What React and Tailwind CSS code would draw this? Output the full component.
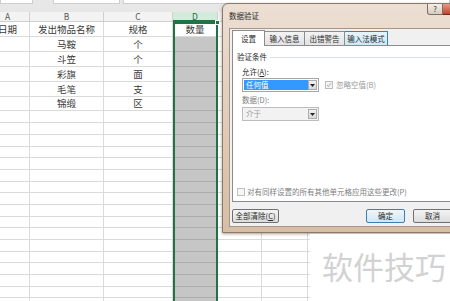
const cols = ['w-[44px]', 'w-[74px]', 'w-[69px]', 'w-[45px]', 'w-[44px]', 'w-[46px]', 'w-[160px]']
// E, F and G sit under the dialog, so their letters are never seen
const letters = ['A', 'B', 'C', 'D', '', '', '']

const data = [
  ['日期', '发出物品名称', '规格', '数量'],
  ['', '马鞍', '个', ''],
  ['', '斗笠', '个', ''],
  ['', '彩旗', '面', ''],
  ['', '毛笔', '支', ''],
  ['', '锦缎', '区', ''],
]
const dataH = ['h-[15px]', 'h-[15px]', 'h-[15px]', 'h-[15px]', 'h-[15px]', 'h-[14px]']
const emptyH = [12, 12, 12, 11, 12, 12, 11, 12, 12, 11, 12, 12, 11, 12, 12, 11, 12]

function Row({ cells, h, first }) {
  return (
    <div className={`flex ${h}`}>
      {cols.map((w, i) => {
        const sel = i === 3 && !first
        return (
          <div
            key={i}
            className={`${w} shrink-0 flex items-center justify-center border-r border-b ${
              sel ? 'bg-[#c6c6c6] border-b-[#adadad] border-r-[#c6c6c6]' : 'border-[#dadada]'
            }`}
          >
            {cells[i] || ''}
          </div>
        )
      })}
    </div>
  )
}

function Arrow() {
  return (
    <svg width="5" height="3" viewBox="0 0 5 3">
      <path d="M0 0h5L2.5 3z" fill="#222" />
    </svg>
  )
}

function Dialog() {
  return (
    <div className="absolute left-[222px] top-[3px] w-[240px] h-[230px] rounded-t-[6px] border border-[#8a7a6c] bg-gradient-to-b from-[#ecdfd3] via-[#e0ccb9] to-[#d6bda6] px-[6px] pb-[5px] flex flex-col shadow-[0_1px_3px_rgba(90,60,30,0.5)]">
      <div className="h-[24px] flex items-start">
        <div className="mt-[7px] text-[7.5px] leading-[10px] text-[#2a2a2a]">数据验证</div>
        <div className="ml-auto flex">
          <div className="w-[16px] h-[11px] border border-t-0 border-[#7d6e62] rounded-bl-[3px] bg-gradient-to-b from-[#f6efe8] to-[#d8cbbe] flex items-center justify-center text-[7.5px] leading-none text-[#333]">?</div>
          <div className="w-[12px] h-[11px] border border-t-0 border-l-0 border-[#6e2a1e] bg-gradient-to-b from-[#e29a86] to-[#c2412a]"></div>
        </div>
      </div>
      <div className="flex-1 bg-[#f0f0f0] border border-[#a99584] px-[2px] pt-[2px] flex flex-col text-[7.5px] leading-[10px] text-[#2a2a2a]">
        <div className="flex h-[14px] items-end">
          <div className="w-[33px] h-[16px] -mb-px z-10 bg-white border border-b-0 border-[#898c95] flex items-center justify-center">设置</div>
          <div className="w-[40px] h-[14px] bg-gradient-to-b from-[#f3f3f3] to-[#e3e3e3] border border-l-0 border-b-0 border-[#898c95] flex items-center justify-center">输入信息</div>
          <div className="w-[40px] h-[14px] bg-gradient-to-b from-[#f3f3f3] to-[#e3e3e3] border border-l-0 border-b-0 border-[#898c95] flex items-center justify-center">出错警告</div>
          <div className="w-[43px] h-[14px] bg-gradient-to-b from-[#e6f4fc] to-[#cde8f7] border border-l-0 border-b-0 border-[#3c7fb1] flex items-center justify-center">输入法模式</div>
        </div>
        <div className="h-[157px] bg-white border border-[#898c95] flex flex-col pb-[4px]">
          <div className="mt-[6px] flex items-center pl-[4px]">
            <span>验证条件</span>
            <div className="flex-1 ml-[3px] border-t border-[#d5dfe5]"></div>
          </div>
          <div className="pl-[9px]">
            <div className="mt-[5px]">
              允许(<span className="underline">A</span>):
            </div>
            <div className="mt-[1px] flex items-center">
              <div className="w-[77px] h-[14px] border border-[#a6a6a6] bg-white p-px flex">
                <div className="flex-1 bg-[#3399ff] text-white pl-[2px] flex items-center">任何值</div>
                <div className="w-[9px] border border-[#acacac] bg-gradient-to-b from-[#f2f2f2] to-[#d8d8d8] flex items-center justify-center">
                  <Arrow />
                </div>
              </div>
              <div className="ml-[6px] w-[8px] h-[8px] border border-[#bcbcbc] bg-[#f4f4f4] flex items-center justify-center">
                <svg width="6" height="6" viewBox="0 0 6 6">
                  <path d="M1 3l1.4 1.5L5 1.2" fill="none" stroke="#a8a8a8" strokeWidth="1" />
                </svg>
              </div>
              <span className="ml-[3px] text-[#9a9a9a]">忽略空值(B)</span>
            </div>
            <div className="mt-[3px] text-[#7a7a7a]">数据(D):</div>
            <div className="mt-[2px] w-[77px] h-[14px] border border-[#bdbdbd] bg-[#f2f2f2] p-px flex">
              <div className="flex-1 text-[#9a9a9a] pl-[2px] flex items-center">介于</div>
              <div className="w-[9px] border border-[#acacac] bg-gradient-to-b from-[#f2f2f2] to-[#d8d8d8] flex items-center justify-center">
                <Arrow />
              </div>
            </div>
          </div>
          <div className="mt-auto pl-[4px] flex items-center">
            <div className="w-[8px] h-[8px] border border-[#c0c0c0] bg-[#f6f6f6]"></div>
            <span className="ml-[2px] text-[#7e7e7e]">对有同样设置的所有其他单元格应用这些更改(P)</span>
          </div>
        </div>
        <div className="mt-[7px] flex">
          <div className="w-[52px] h-[14px] rounded-[2px] border border-[#707070] bg-gradient-to-b from-[#f4f4f4] to-[#dcdcdc] flex items-center justify-center">
            全部清除(<span className="underline">C</span>)
          </div>
          <div className="ml-[87px] w-[43px] h-[14px] rounded-[2px] border border-[#3c7fb1] bg-gradient-to-b from-[#eef6fb] to-[#d3e6f3] flex items-center justify-center">确定</div>
          <div className="ml-[8px] w-[43px] h-[14px] rounded-[2px] border border-[#707070] bg-gradient-to-b from-[#f4f4f4] to-[#dcdcdc] flex items-center justify-center">取消</div>
        </div>
      </div>
    </div>
  )
}

export default function App() {
  return (
    <div className="relative w-[450px] h-[301px] overflow-hidden bg-white font-['Noto_Sans_CJK_SC',sans-serif] text-[9.5px] text-[#3a3a3a]">
      <div className="h-[12px] bg-[#e7e7e7] flex items-start">
        <div className="w-[33px] h-[4px] bg-white border border-t-0 border-[#cdcdcd]"></div>
        <div className="ml-[20px] w-[67px] h-[4px] bg-white border border-t-0 border-[#cdcdcd]"></div>
        <div className="ml-[3px] flex-1 h-[4px] bg-white border border-t-0 border-[#cdcdcd]"></div>
      </div>
      <div className="-ml-[14px]">
        <div className="flex h-[10px] bg-[#f3f3f3] text-[8.5px] text-[#555]">
          {cols.map((w, i) => (
            <div
              key={i}
              className={`${w} shrink-0 flex items-center justify-center border-r ${
                i === 3 ? 'bg-[#d3ebdb] text-[#217346] border-b-2 border-b-[#217346] border-r-[#cfcfcf]' : 'border-b border-[#cfcfcf]'
              }`}
            >
              {letters[i]}
            </div>
          ))}
        </div>
        {data.map((r, i) => (
          <Row key={i} cells={r} h={dataH[i]} first={i === 0} />
        ))}
        {emptyH.map((h, i) => (
          <Row key={i} cells={[]} h={h === 12 ? 'h-[12px]' : 'h-[11px]'} />
        ))}
      </div>
      <div className="absolute left-[173px] top-[22px] w-[45px] bottom-0 border-2 border-b-0 border-[#217346]"></div>
      <div className="absolute left-[215px] top-[20px] w-[5px] h-[5px] bg-[#217346] border border-white"></div>
      <Dialog />
      <div className="absolute left-[310px] top-[234px] right-0 bottom-0 bg-white pl-[12px] pt-[14px] text-[31px] leading-[36px] text-[#d2d2d2]">
        软件技巧
      </div>
    </div>
  )
}
